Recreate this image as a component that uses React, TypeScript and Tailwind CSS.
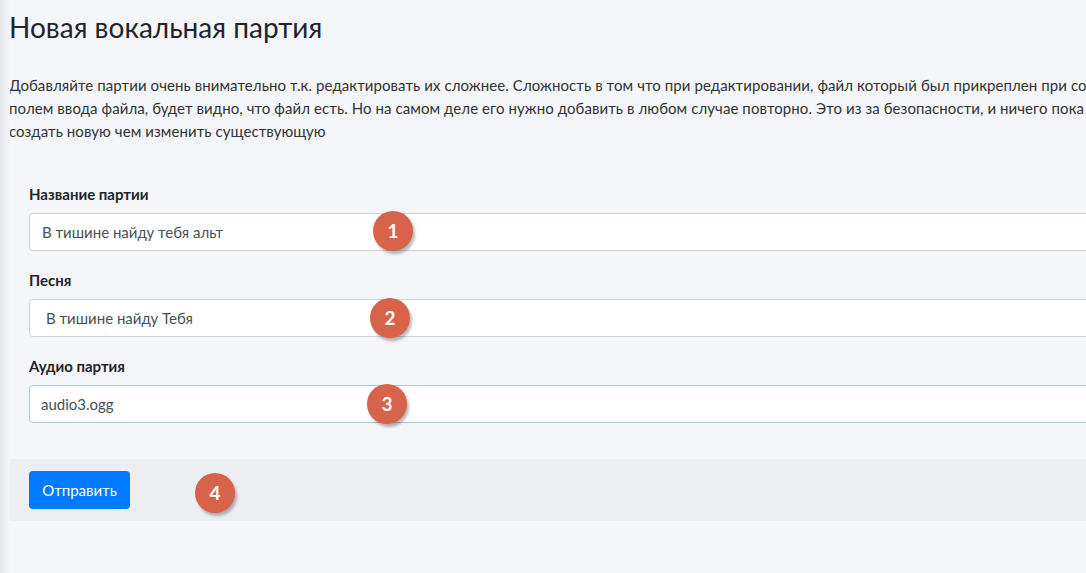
import React from "react";

function Badge({ n, x, y }: { n: string; x: number; y: number }) {
  return (
    <div
      className="absolute flex h-[40px] w-[40px] items-center justify-center rounded-full bg-[#d7634a] text-[19px] font-bold text-white shadow-[2px_3px_3px_rgba(0,0,0,0.28)]"
      style={{ left: x - 20, top: y - 20 }}
    >
      {n}
    </div>
  );
}

export default function App() {
  return (
    <div className="relative h-[573px] w-[1086px] overflow-hidden bg-[#f4f6f9] font-['Lato','Noto_Sans',sans-serif] text-[#212529]">
      <div className="pointer-events-none absolute left-0 top-0 h-full w-[10px] bg-gradient-to-r from-[#e4e6e9] to-[#f4f6f9]" />
      <div className="w-[1400px] pl-[9px]">
        <h1 className="pt-[10px] text-[28px] leading-[34px] font-normal">Новая вокальная партия</h1>
        <p className="mt-[30px] whitespace-nowrap text-[15px] leading-[23px] tracking-[0.08px] text-[#333]">
          Добавляйте партии очень внимательно т.к. редактировать их сложнее. Сложность в том что при редактировании, файл который был прикреплен при создании, не отображается под
          <br />
          полем ввода файла, будет видно, что файл есть. Но на самом деле его нужно добавить в любом случае повторно. Это из за безопасности, и ничего пока с этим не сделать. Поэтому проще
          <br />
          создать новую чем изменить существующую
        </p>
        <div className="mt-[40px] flex flex-col gap-[18px] px-[20px]">
          <div className="flex flex-col gap-[8px]">
            <label className="text-[15px] leading-[22px] font-bold">Название партии</label>
            <div className="flex h-[38px] items-center rounded-[4px] border border-[#ced4da] bg-white pl-[12px] text-[15px] text-[#495057]">
              В тишине найду тебя альт
            </div>
          </div>
          <div className="flex flex-col gap-[8px]">
            <label className="text-[15px] leading-[22px] font-bold">Песня</label>
            <div className="flex h-[38px] items-center rounded-[4px] border border-[#ced4da] bg-white pl-[16px] text-[15px] text-[#495057]">
              В тишине найду Тебя
            </div>
          </div>
          <div className="flex flex-col gap-[8px]">
            <label className="text-[15px] leading-[22px] font-bold">Аудио партия</label>
            <div className="flex h-[38px] items-center rounded-[4px] border border-[#a9c9df] bg-white pl-[11px] text-[15px] text-[#495057]">
              audio3.ogg
            </div>
          </div>
        </div>
        <div className="mt-[36px] flex h-[62px] items-center bg-[#eceef1] px-[20px]">
          <button className="h-[38px] w-[101px] rounded-[4px] bg-[#007bff] text-[15px] text-white">Отправить</button>
        </div>
      </div>
      <Badge n="1" x={393} y={231} />
      <Badge n="2" x={390} y={318} />
      <Badge n="3" x={387} y={404} />
      <Badge n="4" x={215} y={493} />
    </div>
  );
}
